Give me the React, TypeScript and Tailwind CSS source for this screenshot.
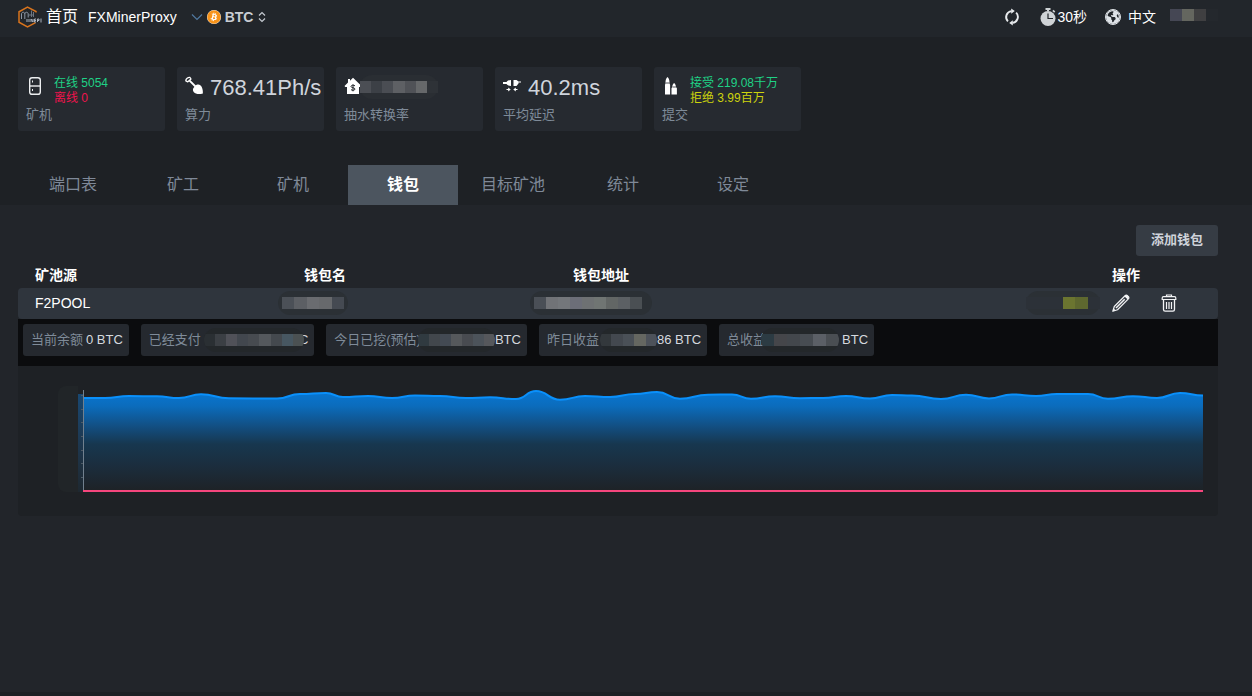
import React from "react";
import { FaBitcoin, FaEarthAmericas } from "react-icons/fa6";

/* ---------- Icons ---------- */

function Logo() {
  return (
    <svg viewBox="0 0 24 22" className="h-[22px] w-6" fill="none" aria-hidden="true">
      <path d="M18 6.500V5.500L9.500 1.200 1 5.800v10.400l8.500 4.600 8-4.200" stroke="#d9741d" strokeWidth="1.500" />
      <path d="M3.500 13V8c0-2.300 3.300-2.300 3.300 0v5M6.800 8c0-2.300 3.400-2.300 3.400 0v3.500" stroke="#8b95a5" strokeWidth="1" />
      <path d="M10 9h6M13.500 4.500V11M15.500 6v5" stroke="#6d7683" strokeWidth="1" />
      <path d="M9 13v3M11 13v3M13 16v-3l2 3v-3M18 13h-1.500v3H18M16.500 14.500H18M19.500 16v-3H21v1.500h-1.500M23 12.500v4" stroke="#aab2bd" strokeWidth="1" />
    </svg>
  );
}

function ChevronIcon() {
  return (
    <svg viewBox="0 0 12 8" className="h-2 w-3" fill="none" stroke="#50789f" strokeWidth="1.200" aria-hidden="true">
      <path d="M1 1.500 6 6.500l5-5" />
    </svg>
  );
}

function SortIcon() {
  return (
    <svg viewBox="0 0 8 12" className="h-3 w-2" fill="none" stroke="#c5cad1" strokeWidth="1.200" aria-hidden="true">
      <path d="M1 4.500 4 1.500l3 3M1 7.500l3 3 3-3" />
    </svg>
  );
}

function RefreshIcon() {
  return (
    <svg viewBox="0 0 16 18" className="h-[18px] w-4" aria-hidden="true">
      <g fill="none" stroke="#e8eaed" strokeWidth="1.900">
        <path d="M3.900 13.300A6 6 0 0 1 7.500 3.100" />
        <path d="M12.100 4.700A6 6 0 0 1 8.500 14.900" />
      </g>
      <path d="M7.200.4v5.400L10.800 3.100zM8.800 17.600v-5.400L5.200 14.900z" fill="#e8eaed" />
    </svg>
  );
}

function StopwatchIcon() {
  return (
    <svg viewBox="0 0 16 18" className="h-[18px] w-4" aria-hidden="true">
      <path d="M5.500 0h5v2H9v1.200H7V2H5.500zM12.300 3l1.200-1.300 1.800 1.700-1.200 1.300z" fill="#cfd3d6" />
      <circle cx="8" cy="10.500" r="7.500" fill="#cfd3d6" />
      <path d="M8 5.500v5h5" fill="none" stroke="#22262b" strokeWidth="1.200" />
    </svg>
  );
}

function MinerIcon() {
  return (
    <svg viewBox="0 0 18 20" className="h-5 w-[18px]" fill="none" stroke="#eceef0" aria-hidden="true">
      <rect x="3.700" y="2.700" width="10.600" height="16.600" rx="2.400" strokeWidth="1.400" />
      <path d="M4 11h10" strokeWidth="1.400" />
      <path d="M6.500 5.500v2M6.500 14v2" strokeWidth="1" />
    </svg>
  );
}

function ShovelIcon() {
  return (
    <svg viewBox="0 0 18 20" className="h-5 w-[18px]" aria-hidden="true">
      <path d="M.8 5.800C.8 4 3 2.200 5 2.500L6 4 2.800 6.800z" fill="none" stroke="#fff" strokeWidth="1.300" strokeLinejoin="round" />
      <path d="M4.300 5.300 11 12" stroke="#fff" strokeWidth="1.900" fill="none" />
      <path d="M8.300 13.200c1-1 1.200-1.200 2-2.200 1.300-1.600 3.700-2 5.300-.4 1.600 1.500 2.400 4.200 2.300 7.900-3.500 1-7.300.8-9-1.200-1-1.200-1.300-3-.6-4.100z" fill="#fff" />
    </svg>
  );
}

function HouseIcon() {
  return (
    <svg viewBox="0 0 18 20" className="h-5 w-[18px]" aria-hidden="true">
      <path d="M9 2.800 17.500 11l-.8 1H15v7H3v-7H1.300l-.8-1L4 7.600V4h2v1.700z" fill="#fff" />
      <path d="M11 10.900c-1-1.100-4-.9-4 .6 0 1.700 4 .9 4 2.500 0 1.500-3 1.700-4 .6M9 9.300v7" stroke="#22262b" strokeWidth="1" fill="none" />
    </svg>
  );
}

function PlugIcon() {
  return (
    <svg viewBox="0 0 18 20" className="h-5 w-[18px]" fill="#fff" aria-hidden="true">
      <path d="M0 7h3.500C4.500 5.600 6.200 5 8 5v6c-1.800 0-3.500-.6-4.500-2H0zM18 7.400h-2.500v1.200H18v0h-2.500L13.500 11h-3V5h3l2 1.400H18z" />
      <path d="M3.500 14h1.700v-1.500l2.500 2-2.500 2V15H3.500zM14.500 14h-1.700v-1.500l-2.500 2 2.500 2V15h1.700z" />
    </svg>
  );
}

function ShellsIcon() {
  return (
    <svg viewBox="0 0 18 20" className="h-5 w-[18px]" fill="#fff" aria-hidden="true">
      <path d="M3.500 7.500c0-2.400.7-4.400 2-5.500 1.300 1.100 2 3.100 2 5.500v1l.6 1.200V19.500H3V9.700l.5-1.200zM10.300 12c0-1.700.6-3.100 1.800-4 1.200.9 1.800 2.300 1.800 4l1 1.300v6.200H9.500v-6.200z" />
      <path d="M3.500 8h4M10.500 12h3.400" stroke="#262a30" strokeWidth=".8" />
    </svg>
  );
}

function PencilIcon() {
  return (
    <svg viewBox="0 0 18 18" className="size-[18px]" aria-hidden="true">
      <path d="M.8 17.200 2.300 12.500 12.800 2c1-1 2.100-.9 2.800-.2l.6.6c.8.800.9 1.800-.1 2.800L5.500 15.700z" fill="none" stroke="#f3f4f6" strokeWidth="1.200" strokeLinejoin="round" />
      <path d="M12.300 2.200c1.300-1.500 2.600-1.500 3.600-.5s1.200 2.300-.2 3.700zM.8 17.200l.8-3 2.200 2.200z" fill="#f3f4f6" />
      <path d="m4 14 8.700-8.700" stroke="#f3f4f6" strokeWidth="1.500" />
    </svg>
  );
}

function TrashIcon() {
  return (
    <svg viewBox="0 0 16 18" className="h-[18px] w-4" fill="none" stroke="#f3f4f6" aria-hidden="true">
      <path d="M5.500 2.500V1h5v1.500" strokeWidth="1.200" />
      <path d="M1.200 5.500V4q0-1.300 1.300-1.300h11q1.300 0 1.300 1.300v1.500z" strokeWidth="1.200" />
      <path d="M2.500 5.500v10q0 1.700 1.600 1.700h7.800q1.600 0 1.600-1.700v-10" strokeWidth="1.300" />
      <path d="M5.500 8v7M8 8v7M10.500 8v7" strokeWidth="1.200" />
    </svg>
  );
}

/* ---------- Masked values ---------- */

function Mask({ cells, className = "" }: { cells: string[]; className?: string }) {
  return (
    <span aria-hidden="true" className={"flex shrink-0 items-center rounded-full " + className}>
      {cells.map((c, i) => (
        <span key={i} className={"h-3 flex-1 " + c} />
      ))}
    </span>
  );
}

/* ---------- Sections ---------- */

function Header() {
  return (
    <header className="flex h-[37px] items-center bg-[#22262b] pr-[34px] pb-[3px] pl-[18px] text-sm text-white">
      <a href="#home" className="flex items-center gap-1 text-base">
        <Logo />
        首页
      </a>
      <button type="button" className="ml-2.5 flex items-center gap-3.5">
        FXMinerProxy
        <ChevronIcon />
      </button>
      <button type="button" className="ml-1 flex items-center gap-1 font-bold text-[#c9cdd3]">
        <FaBitcoin className="size-3.5 rounded-full bg-white text-[#f7931a]" />
        BTC
        <span className="pl-px">
          <SortIcon />
        </span>
      </button>
      <div className="ml-auto flex items-center">
        <button type="button" aria-label="刷新">
          <RefreshIcon />
        </button>
        <button type="button" className="ml-5 flex items-center gap-px">
          <StopwatchIcon />
          30秒
        </button>
        <button type="button" className="ml-[18px] flex items-center gap-[7px]">
          <span className="rounded-full border border-[#e3e6ea]">
            <FaEarthAmericas className="size-3.5 text-[#dfe3e8]" />
          </span>
          中文
        </button>
        <Mask className="ml-3.5 w-12 pb-1" cells={["bg-[#454754]", "bg-[#64665f]", "bg-[#3f3f41]", "bg-[#24282d]"]} />
      </div>
    </header>
  );
}

function StatCard({ icon, label, children }: { icon: React.ReactNode; label: string; children: React.ReactNode }) {
  return (
    <div className="h-16 w-[147px] rounded-[3px] bg-[#262a30] pt-2 pl-2">
      <div className="flex h-[30px] items-start whitespace-nowrap">
        <span className="shrink-0">{icon}</span>
        {children}
      </div>
      <div className="mt-0.5 text-[13px] leading-4 text-[#7f8b99]">{label}</div>
    </div>
  );
}

function Big({ children }: { children: React.ReactNode }) {
  return <span className="ml-[7px] text-[22px] leading-[25px] text-[#cfd4dc]">{children}</span>;
}

function Stats() {
  return (
    <section className="flex flex-wrap gap-3 px-[18px] pt-[30px]">
      <StatCard icon={<MinerIcon />} label="矿机">
        <div className="ml-2.5 pt-px text-xs leading-[15px]">
          <p className="text-[#1fd286]">在线 5054</p>
          <p className="text-[#f0134d]">离线 0</p>
        </div>
      </StatCard>
      <StatCard icon={<ShovelIcon />} label="算力">
        <Big>768.41Ph/s</Big>
      </StatCard>
      <StatCard icon={<HouseIcon />} label="抽水转换率">
        <Mask
          className="-ml-0.5 h-6 w-[78px] bg-[#2a2e33]"
          cells={["bg-[#4b4e54]", "bg-[#3c4046]", "bg-[#4a4d53]", "bg-[#5e6064]", "bg-[#505257]", "bg-[#66686a]", "bg-[#2e3237]"]}
        />
      </StatCard>
      <StatCard icon={<PlugIcon />} label="平均延迟">
        <Big>40.2ms</Big>
      </StatCard>
      <StatCard icon={<ShellsIcon />} label="提交">
        <div className="ml-2.5 pt-px text-xs leading-[15px]">
          <p className="text-[#1fd286]">接受 219.08千万</p>
          <p className="text-[#cdd40d]">拒绝 3.99百万</p>
        </div>
      </StatCard>
    </section>
  );
}

const tabs = ["端口表", "矿工", "矿机", "钱包", "目标矿池", "统计", "设定"];

function Tabs() {
  return (
    <nav className="mt-[34px] flex px-[18px]">
      {tabs.map((t) => (
        <button
          key={t}
          type="button"
          aria-current={t === "钱包" ? "page" : undefined}
          className={
            t === "钱包"
              ? "h-10 w-[110px] bg-[#4c555f] text-base font-bold text-white"
              : "h-10 w-[110px] text-base text-[#7f8998]"
          }
        >
          {t}
        </button>
      ))}
    </nav>
  );
}

function Chip({ label, children }: { label: string; children: React.ReactNode }) {
  return (
    <div className="flex h-8 items-center rounded-[3px] bg-[#25292f] pr-1.5 pl-2 text-[13px] whitespace-nowrap text-[#d5d9df]">
      <span className="text-[#7f8b99]">{label}</span>
      {children}
    </div>
  );
}

function Earnings() {
  return (
    <div className="flex flex-wrap gap-3 bg-[#0b0c0e] px-[5px] pt-[5px] pb-2.5">
      <Chip label="当前余额">
        <span className="ml-[3px]">0 BTC</span>
      </Chip>
      <Chip label="已经支付">
        <Mask
          className="relative -mr-[5px] ml-[3px] h-6 w-[100px] overflow-hidden bg-[#23272a]"
          cells={["bg-[#2a2f33]", "bg-[#3b3f44]", "bg-[#505158]", "bg-[#42474e]", "bg-[#474b50]", "bg-[#54585c]", "bg-[#44494e]", "bg-[#475761]", "bg-[#4b5152]"]}
        />
        <span>C</span>
      </Chip>
      <Chip label="今日已挖(预估)">
        <Mask
          className="relative -ml-[3px] h-6 w-[77px] overflow-hidden bg-[#23272a]"
          cells={["bg-[#303a40]", "bg-[#42474c]", "bg-[#434a53]", "bg-[#55585b]", "bg-[#484b50]", "bg-[#4c535a]", "bg-[#56585c]"]}
        />
        <span>BTC</span>
      </Chip>
      <Chip label="昨日收益">
        <Mask
          className="ml-px h-6 w-[57px] overflow-hidden bg-[#23272a]"
          cells={["bg-[#33383c]", "bg-[#43484f]", "bg-[#4a5057]", "bg-[#656761]", "bg-[#4d525a]"]}
        />
        <span>86 BTC</span>
      </Chip>
      <Chip label="总收益">
        <Mask
          className="relative mr-[3px] -ml-[5px] h-6 w-[78px] overflow-hidden bg-[#23272a]"
          cells={["bg-[#2c3b43]", "bg-[#45464a]", "bg-[#43474c]", "bg-[#474c52]", "bg-[#5b5f66]", "bg-[#4a4e53]"]}
        />
        <span>BTC</span>
      </Chip>
    </div>
  );
}

function WalletTable() {
  return (
    <table className="w-full table-fixed border-collapse text-left text-sm text-white">
      <colgroup>
        <col className="w-[260px]" />
        <col className="w-[252px]" />
        <col />
        <col className="w-[74px]" />
        <col className="w-[118px]" />
      </colgroup>
      <thead>
        <tr className="h-8">
          <th className="pt-1.5 pl-[17px]">矿池源</th>
          <th className="pt-1.5 pl-[26px]">钱包名</th>
          <th className="pt-1.5 pl-[43px]">钱包地址</th>
          <th aria-label="状态" />
          <th className="pt-1.5 pl-3">操作</th>
        </tr>
      </thead>
      <tbody>
        <tr className="h-[31px]">
          <td className="rounded-l-[4px] bg-[#2f353d] pb-0.5 pl-[17px]">F2POOL</td>
          <td className="bg-[#2f353d] pb-0.5">
            <Mask
              className="h-6 w-[70px] bg-[#2b3035] px-1"
              cells={["bg-[#4b5057]", "bg-[#5c5f64]", "bg-[#6a6c70]", "bg-[#67696c]", "bg-[#454a52]"]}
            />
          </td>
          <td className="bg-[#2f353d] pb-0.5">
            <Mask
              className="h-6 w-[122px] bg-[#2b3035] pr-2.5 pl-1"
              cells={["bg-[#4a4f56]", "bg-[#717377]", "bg-[#74777b]", "bg-[#6c6e78]", "bg-[#6e7173]", "bg-[#707573]", "bg-[#626665]", "bg-[#5c6064]", "bg-[#4a4f53]"]}
            />
          </td>
          <td className="bg-[#2f353d] pb-0.5">
            <Mask
              className="h-6 w-[74px] bg-[#2b3035]"
              cells={["bg-[#2c3138]", "bg-[#2c3138]", "bg-[#2c3138]", "bg-[#6b7530]", "bg-[#5e682f]", "bg-[#2c3138]"]}
            />
          </td>
          <td className="rounded-r-[4px] bg-[#2f353d] pb-0.5 pl-3">
            <div className="flex items-center gap-[31px]">
              <button type="button" aria-label="编辑">
                <PencilIcon />
              </button>
              <button type="button" aria-label="删除">
                <TrashIcon />
              </button>
            </div>
          </td>
        </tr>
      </tbody>
    </table>
  );
}

const series: [number, number][] = [
  [0, 8], [22, 8], [46, 6], [74, 6.3], [96, 8], [118, 4.3], [146, 8.3], [194, 8.5], [217, 4],
  [243, 3], [260, 7], [285, 6], [309, 8], [332, 5.5], [357, 6], [383, 8], [407, 7.3], [433, 9],
  [453, 1], [477, 9.7], [502, 6], [527, 7], [552, 4], [574, 2], [597, 8.7], [625, 4.7],
  [649, 4.5], [668, 8.8], [692, 6.3], [717, 8.2], [740, 8], [763, 5.9], [787, 8.4],
  [809, 5], [829, 5.5], [858, 9], [883, 4.7], [906, 8.4], [929, 4.4], [953, 6], [974, 4],
  [1005, 4], [1025, 8.8], [1050, 6.2], [1074, 8], [1097, 3], [1120, 5.5],
];

function smooth(points: [number, number][]) {
  return points
    .map(([x, y], i) => {
      if (i === 0) return `M${x} ${y}`;
      const [px, py] = points[i - 1];
      const mid = (px + x) / 2;
      return `C${mid} ${py} ${mid} ${y} ${x} ${y}`;
    })
    .join("");
}

function Chart() {
  const line = smooth(series);
  return (
    <div className="flex h-[150px] rounded-b-[4px] bg-[#1e2125] pt-4 pr-[15px] pl-10">
      <div className="flex h-[114px] w-[25px] shrink-0" aria-hidden="true">
        <div className="my-1 w-5 rounded-l-lg bg-[#212528]" />
        <div className="mt-3 h-[98px] w-[5px] bg-linear-to-b from-[#184872] to-[#1e2830]" />
      </div>
      <svg viewBox="0 0 1120 104" preserveAspectRatio="none" className="mt-2 h-[104px] w-full min-w-0 overflow-visible" role="img" aria-label="算力曲线">
        <defs>
          <linearGradient id="area" x1="0" y1="0" x2="0" y2="1">
            <stop offset="0" stopColor="#0876d2" />
            <stop offset=".15" stopColor="#0b6cbc" />
            <stop offset=".35" stopColor="#124f83" />
            <stop offset=".53" stopColor="#17374f" />
            <stop offset=".75" stopColor="#1b2d3d" />
            <stop offset="1" stopColor="#1e2226" />
          </linearGradient>
        </defs>
        <path d={`${line}V101H0Z`} fill="url(#area)" />
        <path d={line} fill="none" stroke="#0a90fb" strokeWidth="2" />
        <path d="M.5 0V101" stroke="#71808e" strokeWidth="1" />
        <path d="M-2 5.500H0M-2 19.500H0M-2 32.500H0M-2 46.500H0M-2 60.500H0M-2 73.500H0M-2 87.500H0" stroke="#4c5965" strokeWidth="1" />
        <path d="M0 101H1120" stroke="#f5467d" strokeWidth="2" />
      </svg>
    </div>
  );
}

export default function App() {
  return (
    <div className="flex min-h-screen flex-col bg-[#22252a] font-['Liberation_Sans','Noto_Sans_CJK_SC',sans-serif]">
      <Header />
      <div className="bg-[#1e2125]">
        <Stats />
        <Tabs />
      </div>
      <main className="pt-5 pr-[34px] pl-[18px]">
        <div className="flex justify-end">
          <button type="button" className="h-[31px] rounded-[3px] bg-[#363c44] px-[15px] pb-0.5 text-[13px] font-bold text-[#cfd3da]">
            添加钱包
          </button>
        </div>
        <WalletTable />
        <Earnings />
        <Chart />
      </main>
      <footer className="mt-auto h-1 bg-[#1d2024]" />
    </div>
  );
}
